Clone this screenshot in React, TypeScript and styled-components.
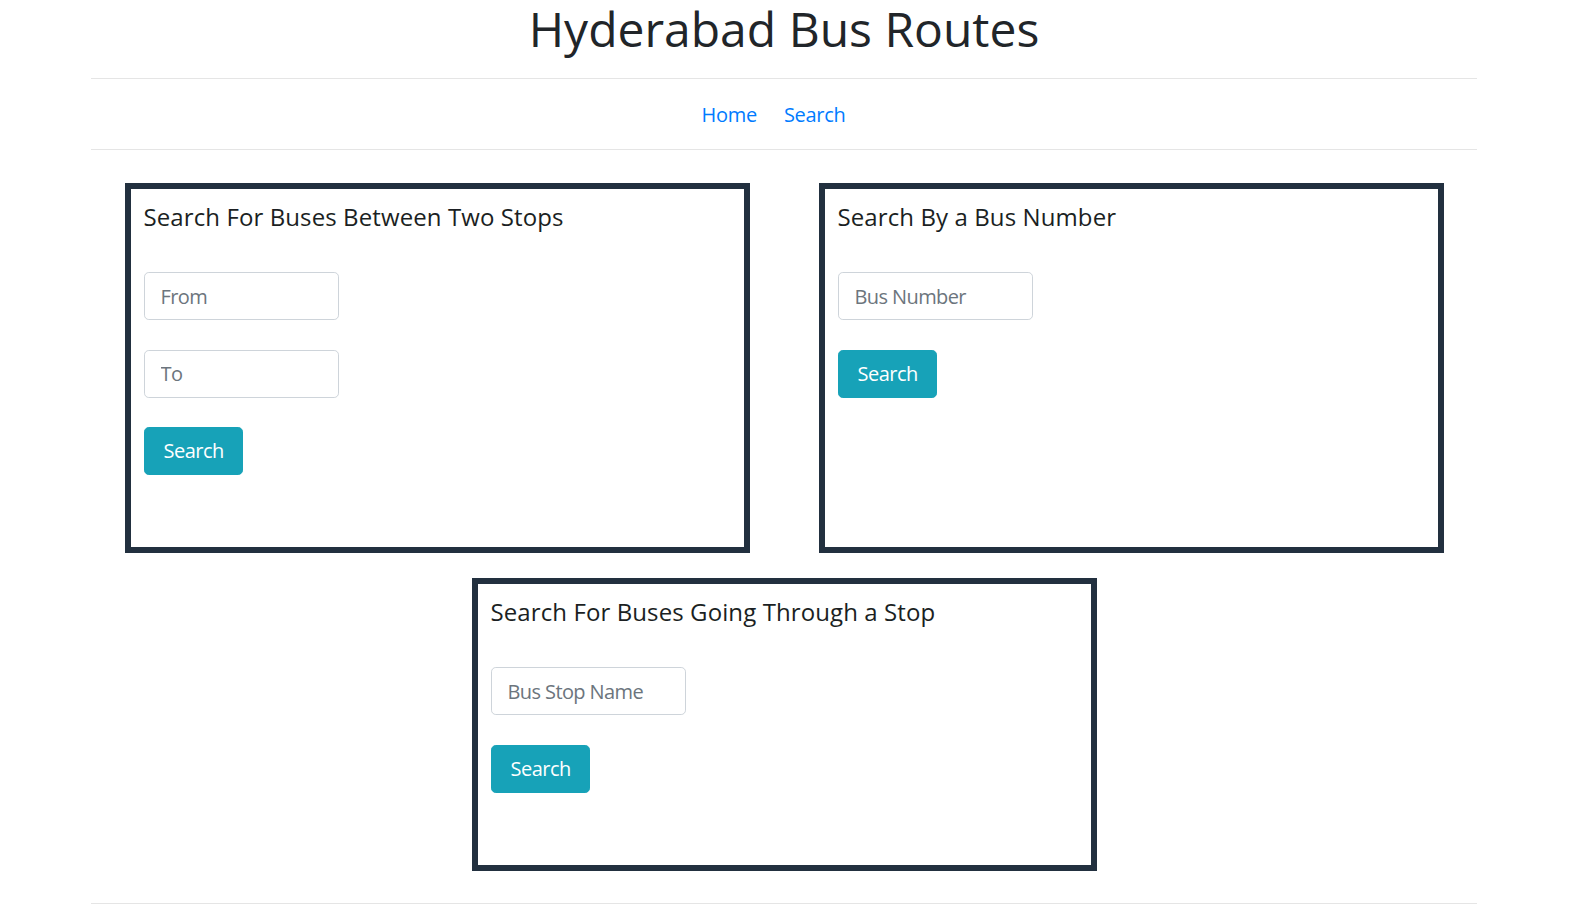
import React from "react";
import styled, { createGlobalStyle } from "styled-components";

const GlobalStyle = createGlobalStyle`
  html, body {
    margin: 0;
    padding: 0;
    background: #ffffff;
  }
  body {
    font-family: "Open Sans", "Noto Sans", "Liberation Sans", sans-serif;
    color: #212529;
  }
  * { box-sizing: border-box; }
`;

const Container = styled.div`
  width: 1386px;
  margin-left: 91px;
`;

const Title = styled.h1`
  margin: 0 0 20px;
  font-size: 48px;
  line-height: 58px;
  font-weight: 400;
  text-align: center;
  color: #212529;
  letter-spacing: 0;
`;

const Divider = styled.hr`
  margin: 0;
  border: 0;
  border-top: 1px solid #e5e5e5;
  height: 0;
`;

const Nav = styled.nav`
  height: 70px;
  display: flex;
  align-items: center;
  justify-content: center;
  gap: 27px;
  padding-right: 21px;
  padding-top: 2px;
`;

const NavLink = styled.a`
  font-size: 20px;
  line-height: 30px;
  color: #007bff;
  text-decoration: none;
  letter-spacing: -0.3px;
`;

const Cards = styled.main`
  padding-top: 33px;
  padding-bottom: 32px;
  display: flex;
  flex-direction: column;
  gap: 25px;
`;

const Row = styled.div<{ $single?: boolean }>`
  display: grid;
  grid-template-columns: ${(p) => (p.$single ? "625px" : "625px 625px")};
  justify-content: center;
  column-gap: 69px;
  align-items: stretch;
`;

const Card = styled.section`
  border: 6px solid #22303f;
  padding: 13px 13px 72px;
  display: flex;
  flex-direction: column;
  align-items: flex-start;
`;

const CardTitle = styled.h4`
  margin: 0 0 41px;
  padding-top: 1px;
  font-size: 24px;
  line-height: 28px;
  font-weight: 500;
  color: #1b1f23;
  letter-spacing: 0.1px;
`;

const Fields = styled.div`
  display: flex;
  flex-direction: column;
  align-items: flex-start;
  gap: 29.5px;
`;

const Input = styled.input`
  width: 195px;
  height: 48px;
  padding: 8px 16px;
  font-family: inherit;
  font-size: 20px;
  line-height: 30px;
  color: #495057;
  border: 1px solid #ced4da;
  border-radius: 4.8px;
  outline: none;
  letter-spacing: -0.6px;
  &::placeholder {
    color: #6c757d;
  }
`;

const Button = styled.button`
  height: 48px;
  padding: 8px 18px 8px 19px;
  font-family: inherit;
  font-size: 20px;
  line-height: 30px;
  color: #ffffff;
  background: #17a2b8;
  border: 1px solid #17a2b8;
  border-radius: 4.8px;
  cursor: pointer;
  letter-spacing: -0.5px;
`;

type SearchCardProps = {
  title: string;
  fields: string[];
};

const SearchCard = ({ title, fields }: SearchCardProps) => (
  <Card>
    <CardTitle>{title}</CardTitle>
    <Fields>
      {fields.map((f) => (
        <Input key={f} type="text" placeholder={f} />
      ))}
      <Button type="button">Search</Button>
    </Fields>
  </Card>
);

export default function App() {
  return (
    <>
      <GlobalStyle />
      <Container>
        <Title>Hyderabad Bus Routes</Title>
        <Divider />
        <Nav>
          <NavLink href="#">Home</NavLink>
          <NavLink href="#">Search</NavLink>
        </Nav>
        <Divider />
        <Cards>
          <Row>
            <SearchCard title="Search For Buses Between Two Stops" fields={["From", "To"]} />
            <SearchCard title="Search By a Bus Number" fields={["Bus Number"]} />
          </Row>
          <Row $single>
            <SearchCard title="Search For Buses Going Through a Stop" fields={["Bus Stop Name"]} />
          </Row>
        </Cards>
        <Divider />
      </Container>
    </>
  );
}
